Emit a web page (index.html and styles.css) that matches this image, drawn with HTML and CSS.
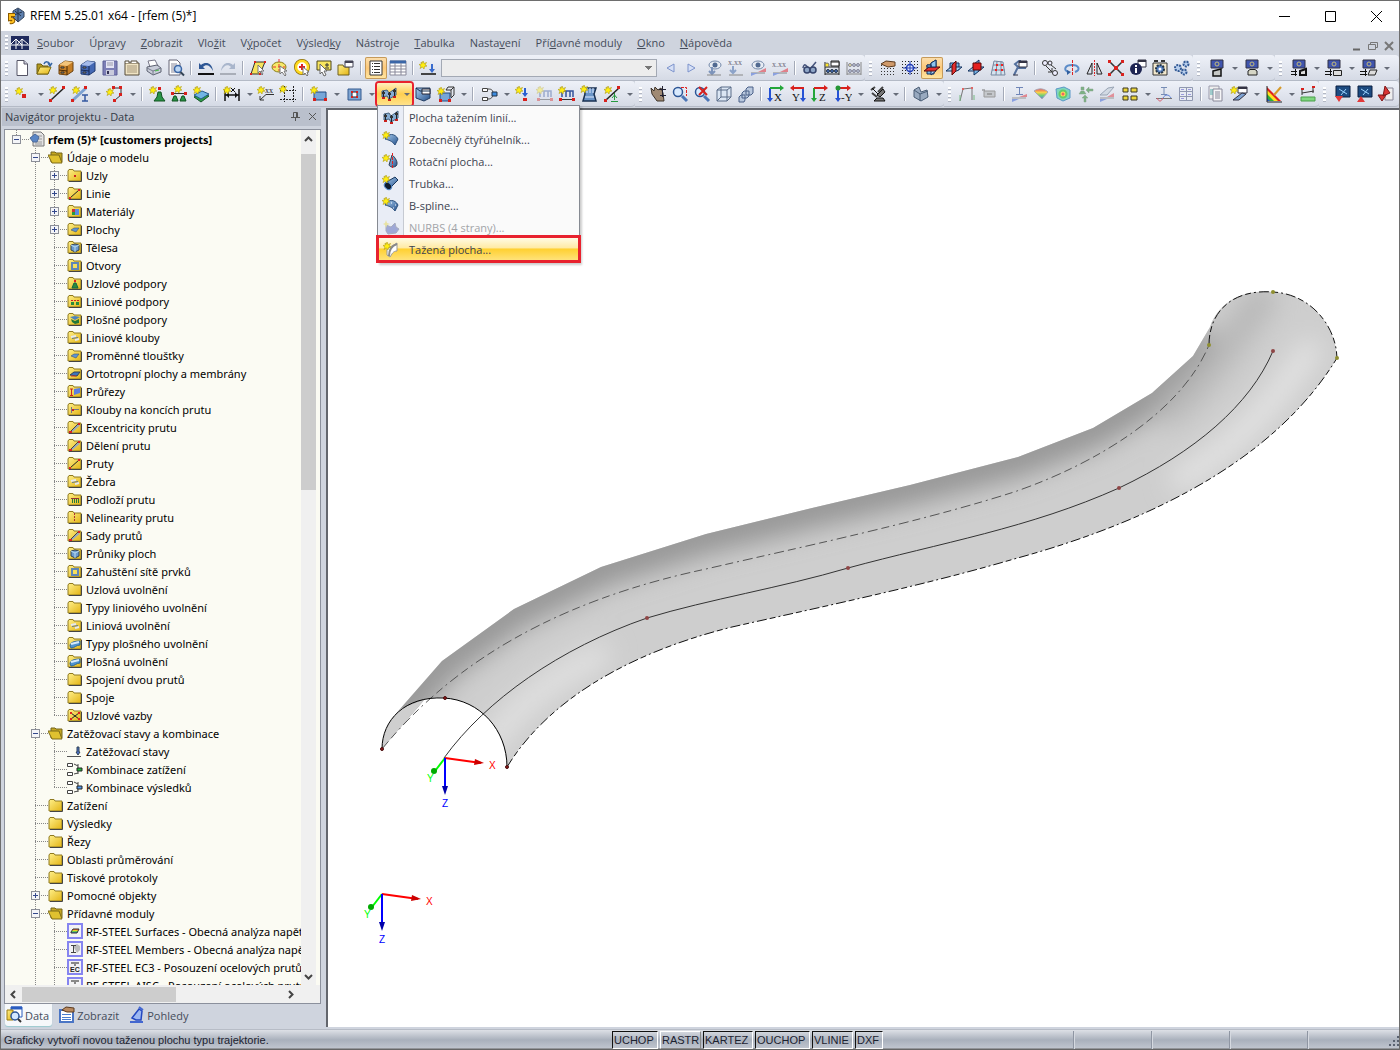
FILE: index.html
```html
<!DOCTYPE html>
<html lang="cs">
<head>
<meta charset="utf-8">
<title>RFEM 5.25.01 x64 - [rfem (5)*]</title>
<link rel="stylesheet" href="styles.css">
</head>
<body>
<svg class="defs" width="0" height="0" aria-hidden="true">
<defs>
<linearGradient id="gy" x2="1" y2="1"><stop offset="0" stop-color="#fff08a"/><stop offset="1" stop-color="#e3b414"/></linearGradient>
<linearGradient id="gb" x2="1" y2="1"><stop offset="0" stop-color="#a9cdef"/><stop offset="1" stop-color="#25518c"/></linearGradient>
<linearGradient id="rb" x2="0" y2="1"><stop offset="0" stop-color="#e33"/><stop offset=".35" stop-color="#fc2"/><stop offset=".65" stop-color="#5c5"/><stop offset="1" stop-color="#36d"/></linearGradient>
<g id="star"><path d="M4 0L5 2.500 7.500 1.500 6 4 8 5 5.500 5.500 5 8 3.500 6 1 7.500 2 5 0 3.500 2.500 3 2 1 3.500 2Z" fill="#ffee10" stroke="#b09c10" stroke-width=".6"/></g>
<g id="mon"><path d="M2 1H14V9H2Z" fill="#3f54ad" stroke="#334"/><circle cx="8" cy="5" r="2" fill="none" stroke="#c4ba78"/></g>
<g id="fold"><path d="M1 4L2 2.500H6L7 4H14V14H1Z" fill="url(#gy)" stroke="#8f7a20"/><path d="M2 14.500H14.500V5" fill="none" stroke="#444"/></g>
</defs>
<symbol id="app" viewBox="0 0 18 18"><path d="M5 4L10 1 16 5V10L10 15 5 10Z" fill="#5d7fae" stroke="#34445c"/><path d="M7 4L13 9M10 2V14M6 8L14 5" stroke="#25354d"/><path d="M7 8H2V12C6 11 7 16 2 15" fill="none" stroke="#8a5a00" stroke-width="4"/><path d="M7 8H2V12C6 11 7 16 2 15" fill="none" stroke="#ffc020" stroke-width="2"/></symbol>
<symbol id="bridge" viewBox="0 0 18 14"><rect width="18" height="14" fill="#1f2a5c"/><path d="M0 9H18M5 3V13M11 3V13M5 3L0 8M5 3L11 9M11 3L17 8M11 3L6 9" stroke="#fff" fill="none"/></symbol>
<symbol id="new" viewBox="0 0 18 18"><path d="M4 1.500H11L14.500 5V16.500H4Z" fill="#fff" stroke="#556"/><path d="M11 1.500V5H14.500" fill="#ccd" stroke="#556"/></symbol>
<symbol id="open" viewBox="0 0 18 18"><path d="M2 15V5H6L8 7H13V15Z" fill="#b39a20" stroke="#6d5c0e"/><path d="M2 15L5 8H16L13 15Z" fill="url(#gy)" stroke="#7a6812"/><path d="M9 5C10 2 14 2 15 6M13 4L15 7 17 4" fill="none" stroke="#3767a5" stroke-width="1.500"/></symbol>
<symbol id="cabo" viewBox="0 0 18 18"><path d="M2 6L8 2 16 3V12L10 16 2 15Z" fill="#c67f26" stroke="#6b4210"/><path d="M2 6L10 7 16 3L8 2Z" fill="#f3c47a"/><path d="M10 7V16M2 11L10 12" stroke="#492a06"/><path d="M4 8H7V9H4ZM4 13H7V14H4Z" fill="#ffe29f" stroke="#333"/></symbol>
<symbol id="cabb" viewBox="0 0 18 18"><path d="M2 6L8 2 16 3V12L10 16 2 15Z" fill="#4468b4" stroke="#203a70"/><path d="M2 6L10 7 16 3L8 2Z" fill="#a5bbea"/><path d="M10 7V16M2 11L10 12" stroke="#172a55"/><path d="M4 8H7V9H4ZM4 13H7V14H4Z" fill="#d5e2ff" stroke="#333"/></symbol>
<symbol id="save" viewBox="0 0 18 18"><path d="M2 2H16V16H2Z" fill="#7c7eb6" stroke="#5d5f96"/><path d="M5 2H13V9H5Z" fill="#e4e4f4"/><path d="M6 4H12M6 6H12" stroke="#99a"/><path d="M5 11H13V16H5Z" fill="#c9cbdc"/><path d="M6 12H8V15H6Z" fill="#335"/></symbol>
<symbol id="note" viewBox="0 0 18 18"><path d="M2 4H16V16H2Z" fill="#f0e4c4" stroke="#544a38"/><path d="M2 4V2H6V4M8 4V2H14V4" fill="#fff" stroke="#544a38"/><path d="M4 7H14M4 9H14M4 11H14M4 13H14" stroke="#a5967a"/></symbol>
<symbol id="print" viewBox="0 0 18 18"><path d="M5 8L3 2 10 1 13 7Z" fill="#fff" stroke="#778"/><path d="M2 8L12 6 16 9V13L8 16 2 12Z" fill="#c9cdd9" stroke="#5d6271"/><path d="M2 9L8 12 16 9M8 12V16" fill="none" stroke="#777c8d"/><path d="M10 12L14 11" stroke="#4b4"/></symbol>
<symbol id="prev" viewBox="0 0 18 18"><path d="M2 1H10L13 4V16H2Z" fill="#fff" stroke="#667"/><path d="M4 5H10M4 7H9M4 9H8M4 11H8M4 13H9" stroke="#889"/><circle cx="11" cy="10" r="3.500" fill="#bcd7f5" stroke="#3a65a5" stroke-width="1.500"/><path d="M13.500 13L17 16.500" stroke="#345" stroke-width="2"/></symbol>
<symbol id="undo" viewBox="0 0 18 18"><path d="M2 4V10H8L6 8C9 5 13 6 16 12C15 4 9 2 4 6Z" fill="#2e5795"/><path d="M1 15H17" stroke="#111" stroke-width="2"/></symbol>
<symbol id="redo" viewBox="0 0 18 18"><path d="M16 4V10H10L12 8C9 5 5 6 2 12C3 4 9 2 14 6Z" fill="#a9b6cc"/><path d="M1 15H17" stroke="#a9aeb8" stroke-width="2"/></symbol>
<symbol id="selp" viewBox="0 0 18 18"><path d="M2 15L6 3H16L11 15Z" fill="#f6e35c" stroke="#333"/><path d="M1 14H3V16H1ZM5 2H7V4H5ZM15 2H17V4H15ZM10 14H12V16H10Z" fill="#d22"/><path d="M9 6V14L11 12 13 16 14 15 12 12H15Z" fill="#fff" stroke="#777"/></symbol>
<symbol id="sele" viewBox="0 0 18 18"><ellipse cx="8" cy="8" rx="7" ry="5" fill="#f6e96a" stroke="#8b7b14"/><path d="M8 0V12M2 8H14" stroke="#e33" stroke-dasharray="3 2"/><path d="M9 7V15L11 13 14 17 15 16 13 12H16Z" fill="#fff" stroke="#777"/></symbol>
<symbol id="selc" viewBox="0 0 18 18"><circle cx="9" cy="8" r="6" fill="none" stroke="#8b6d06" stroke-width="4"/><circle cx="9" cy="8" r="6" fill="#fff" stroke="#ffd91f" stroke-width="2.500"/><path d="M9 5V11M6 8H12" stroke="#d22" stroke-width="2"/><path d="M10 8V16L12 14 14 17 15 16 14 13H16Z" fill="#fff" stroke="#777"/></symbol>
<symbol id="selm" viewBox="0 0 18 18"><path d="M2 2H16V11H2Z" fill="#f8e65e" stroke="#4c461d"/><path d="M10 6H14M12 4V8M10 9H14" stroke="#333"/><path d="M5 5V15L7 13 9 17 11 16 9 12H12Z" fill="#fff" stroke="#666"/></symbol>
<symbol id="wind" viewBox="0 0 18 18"><path d="M1 6H6L7 8H12V16H1Z" fill="url(#gy)" stroke="#6e6120"/><path d="M8 2H16V8H8Z" fill="#fff" stroke="#445"/><path d="M8 3H16" stroke="#445" stroke-width="2"/></symbol>
<symbol id="list" viewBox="0 0 18 18"><path d="M3 2H15V16H3Z" fill="#fff" stroke="#333"/><path d="M7 4.500H13M7 7.500H13M7 10.500H13M7 13.500H13M5 4.500H6M5 7.500H6M5 10.500H6M5 13.500H6" stroke="#333"/></symbol>
<symbol id="tabl" viewBox="0 0 18 18"><path d="M1 2H17V16H1Z" fill="#fff" stroke="#889"/><path d="M1 3H17" stroke="#3b66a7" stroke-width="3"/><path d="M1 7H17M1 10H17M1 13H17M6 4V16M12 4V16" stroke="#889"/></symbol>
<symbol id="lc" viewBox="0 0 18 18"><use href="#star" x="0" y="2"/><path d="M2 15H17" stroke="#444" stroke-width="2"/><path d="M12 5V10H10L13 14 16 10H14V5Z" fill="#376bce"/></symbol>
<symbol id="lt" viewBox="0 0 18 18"><path d="M13 5V13L6 9Z" fill="#d6e0f6" stroke="#7c93cc"/></symbol>
<symbol id="rt" viewBox="0 0 18 18"><path d="M5 5V13L12 9Z" fill="#d6e0f6" stroke="#7c93cc"/></symbol>
<symbol id="eyed" viewBox="0 0 18 18"><ellipse cx="10" cy="6" rx="6" ry="4" fill="#e7ecf3" stroke="#7388a8"/><circle cx="10" cy="6" r="2.500" fill="#516a91"/><path d="M7 8V15M4 12L7 15 10 12" fill="none" stroke="#7d94bb" stroke-width="2"/><path d="M2 16H16" stroke="#888"/></symbol>
<symbol id="xxd" viewBox="0 0 18 18"><path d="M6 7V14M3 11L6 14 9 11" fill="none" stroke="#8ca3c9" stroke-width="2"/><path d="M2 16H16" stroke="#888"/></symbol>
<symbol id="eyer" viewBox="0 0 18 18"><path d="M2 14H16" stroke="#888"/><path d="M9 13L17 9V13Z" fill="#e0808a"/><path d="M2 17L9 14H2Z" fill="#8aa0df"/><ellipse cx="9" cy="6" rx="6" ry="4" fill="#e7ecf3" stroke="#7388a8"/><circle cx="9" cy="6" r="2.500" fill="#516a91"/></symbol>
<symbol id="xxr" viewBox="0 0 18 18"><path d="M2 14H16" stroke="#888"/><path d="M9 13L17 9V13Z" fill="#e0808a"/><path d="M2 17L9 14H2Z" fill="#8aa0df"/></symbol>
<symbol id="glas" viewBox="0 0 18 18"><path d="M2 9C3 3 6 7 8 10M10 9L15 3" fill="none" stroke="#46547c" stroke-width="1.500"/><circle cx="6" cy="11" r="3" fill="#8ea5c6" stroke="#36446c" stroke-width="1.500"/><circle cx="12" cy="11" r="3" fill="#8ea5c6" stroke="#36446c" stroke-width="1.500"/></symbol>
<symbol id="abac" viewBox="0 0 18 18"><path d="M2 3V16M16 3V16M2 15H16M2 8H16" stroke="#222"/><g fill="#496fc0" stroke="#234"><circle cx="5" cy="12" r="1.500"/><circle cx="9" cy="12" r="1.500"/><circle cx="13" cy="12" r="1.500"/></g><circle cx="4" cy="6" r="2" fill="#ffe62c" stroke="#776"/><path d="M8 2H16V7H8Z" fill="#fff" stroke="#222"/><path d="M8 3H16" stroke="#222"/></symbol>
<symbol id="abag" viewBox="0 0 18 18"><path d="M2 3V16M16 3V16M2 15H16" stroke="#888"/><g fill="#b3bdd4" stroke="#889"><circle cx="5" cy="12" r="1.500"/><circle cx="9" cy="12" r="1.500"/><circle cx="13" cy="12" r="1.500"/><circle cx="5" cy="6" r="1.500" fill="#e9e5a0"/><circle cx="9" cy="6" r="1.500"/><circle cx="13" cy="6" r="1.500"/></g></symbol>
<symbol id="hand" viewBox="0 0 18 18"><path d="M2 6.500H17M2 9.500H17M2 12.500H17M2 15.500H17" stroke="#333" stroke-dasharray="1 2"/><path d="M2 5L7 2 16 3V7L9 8Z" fill="#d09a6a" stroke="#5b3a1e"/></symbol>
<symbol id="grid" viewBox="0 0 18 18"><path d="M1 2.500H17M1 5.500H17M1 8.500H17M1 11.500H17M1 14.500H17" stroke="#222" stroke-dasharray="1 2"/><circle cx="9" cy="9" r="3.500" fill="#dfe8ff" stroke="#2440b8" stroke-width="1.500"/><path d="M9 2V16M2 9H16" stroke="#2440b8"/></symbol>
<symbol id="pl1" viewBox="0 0 18 18"><path d="M4 6H11V15H4Z" fill="#73b4e6" stroke="#12305e"/><path d="M8 4L13 1V12L8 16Z" fill="#a6d3f4" stroke="#12305e"/><path d="M1 12L6 8H17L12 12Z" fill="#e53030" stroke="#5b0808"/><path d="M8 4L13 1V8H8ZM4 6H8V8H4Z" fill="#8cc4ee" stroke="#12305e"/></symbol>
<symbol id="pl2" viewBox="0 0 18 18"><path d="M5 4H14V11H5Z" fill="#73b4e6" stroke="#12305e"/><path d="M1 12L6 8H17L12 12Z" fill="#a6d3f4" stroke="#12305e"/><path d="M7 6L11 2V12L7 16Z" fill="#e53030" stroke="#5b0808"/></symbol>
<symbol id="pl3" viewBox="0 0 18 18"><path d="M1 12L6 8H17L12 12Z" fill="#a6d3f4" stroke="#12305e"/><path d="M7 5L12 1V12L7 16Z" fill="#73b4e6" stroke="#12305e"/><path d="M6 4H14V11H6Z" fill="#e51f1f" stroke="#5b0808"/></symbol>
<symbol id="mesh" viewBox="0 0 18 18"><path d="M5 2L14 3 16 16 2 16ZM4 6H15M3 11H16M8 2L7 16M12 2L12 16" fill="#d5e2ee" stroke="#7788a0"/><path d="M7 5H9V7H7ZM12 5H14V7H12ZM6 10H8V12H6ZM12 10H14V12H12Z" fill="#e22"/></symbol>
<symbol id="crane" viewBox="0 0 18 18"><path d="M3 16L7 8 4 5 8 2H10M7 9H15" fill="none" stroke="#54709d" stroke-width="2"/><path d="M8 2H16V8H8Z" fill="#fff" stroke="#334"/><path d="M8 3H16" stroke="#334" stroke-width="2"/><path d="M2 16H7" stroke="#334"/></symbol>
<symbol id="copy" viewBox="0 0 18 18"><circle cx="4" cy="4" r="2.500" fill="#eef" stroke="#333"/><circle cx="9" cy="4" r="2" fill="#eef" stroke="#333"/><circle cx="14" cy="14" r="2.500" fill="#eef" stroke="#333"/><path d="M5 7L11 13M11 9V13H7M10 6L15 10" fill="none" stroke="#333"/></symbol>
<symbol id="rot" viewBox="0 0 18 18"><path d="M5 13C0 11 2 6 9 6S18 11 12 13" fill="none" stroke="#5c8cc8" stroke-width="2"/><path d="M4 11L8 13 4 16Z" fill="#315f9f"/><path d="M9.500 1V17" stroke="#d22" stroke-dasharray="3 1"/></symbol>
<symbol id="mirr" viewBox="0 0 18 18"><path d="M7 4V15H2ZM12 4V15H17Z" fill="none" stroke="#222"/><path d="M9.500 1V17" stroke="#d22" stroke-dasharray="2 1"/></symbol>
<symbol id="xx" viewBox="0 0 18 18"><path d="M3 3L15 15M15 3L3 15" stroke="#333" stroke-width="1.500"/><path d="M1 1H4V4H1ZM14 1H17V4H14ZM1 14H4V17H1ZM14 14H17V17H14ZM7 7H11V11H7Z" fill="#d9221f"/></symbol>
<symbol id="info" viewBox="0 0 18 18"><path d="M9 1H17V8H9Z" fill="#fff" stroke="#334"/><path d="M9 2H17" stroke="#334" stroke-width="2"/><circle cx="7" cy="10" r="6" fill="#1d2452"/><path d="M7 9V14M7 6V8" stroke="#fff" stroke-width="2"/></symbol>
<symbol id="cal" viewBox="0 0 18 18"><path d="M2 4H16V16H2Z" fill="#f3e8cc" stroke="#333"/><path d="M3 2H7M10 2H14" stroke="#333" stroke-width="2"/><circle cx="9" cy="10" r="4" fill="#5780c0" stroke="#234" stroke-dasharray="2 1" stroke-width="2"/><circle cx="9" cy="10" r="1.500" fill="#fff"/></symbol>
<symbol id="gear" viewBox="0 0 18 18"><g fill="#b8cfee" stroke="#335a95" stroke-width="2" stroke-dasharray="2 1"><circle cx="5" cy="9" r="3"/><circle cx="13" cy="5" r="2.500"/><circle cx="11" cy="13" r="2.500"/></g></symbol>
<symbol id="m1" viewBox="0 0 18 18"><use href="#mon" x="1"/><path d="M5 12L13 10V17H5Z" fill="#c6c8c6" stroke="#111" stroke-width="1.500"/></symbol>
<symbol id="m2" viewBox="0 0 18 18"><use href="#mon" x="1"/><path d="M5 16V12L7 10.500H12L14 12V16Z" fill="#d6d6c6" stroke="#222"/></symbol>
<symbol id="m3" viewBox="0 0 18 18"><use href="#mon" x="1"/><path d="M10 12L16 10V16H10Z" fill="#ddd" stroke="#111" stroke-width="2"/><path d="M1 12.500H7M1 15.500H7M5.500 10V17" stroke="#111"/></symbol>
<symbol id="m4" viewBox="0 0 18 18"><use href="#mon" x="1"/><path d="M8.500 11.500H16.500V16.500H8.500Z" fill="#ddd" stroke="#222"/><path d="M0 12.500H7M0 15.500H7M5.500 10V17" stroke="#111"/></symbol>
<symbol id="m5" viewBox="0 0 18 18"><use href="#mon" x="1"/><path d="M8 16L10 11H17L15 16Z" fill="#ddd" stroke="#222"/><path d="M0 12.500H7M0 15.500H7M5.500 10V17" stroke="#111"/></symbol>
<symbol id="node" viewBox="0 0 18 18"><path d="M8 9H12V13H8Z" fill="#d8201c"/><use href="#star" x="1" y="2"/></symbol>
<symbol id="line" viewBox="0 0 18 18"><path d="M3 15L16 3" stroke="#222" stroke-width="1.500"/><path d="M1 14H4V17H1ZM14 1H17V4H14Z" fill="#d8201c"/><use href="#star" x="1" y="1"/></symbol>
<symbol id="memb" viewBox="0 0 18 18"><path d="M2 15L15 3" stroke="#7da2d2" stroke-width="3"/><path d="M0 14H3V17H0ZM13 1H16V4H13Z" fill="#d8201c"/><path d="M11 10H17M11 16H17M14 10V16" stroke="#3458a0" stroke-width="1.500"/><use href="#star" x="1" y="1"/></symbol>
<symbol id="poly" viewBox="0 0 18 18"><path d="M6 3H15V10L9 15" fill="none" stroke="#333"/><path d="M6 1H9V4H6ZM13 1H16V4H13ZM13 8H16V11H13ZM7 14H10V17H7Z" fill="#d8201c"/><use href="#star" x="0" y="3"/></symbol>
<symbol id="sup1" viewBox="0 0 18 18"><path d="M10 2H13V5H10Z" fill="#d8201c"/><path d="M10 7H13L14 12 17 16H6L9 12Z" fill="#299447" stroke="#10521f"/><use href="#star" x="1" y="1"/></symbol>
<symbol id="sup2" viewBox="0 0 18 18"><path d="M2 8.500H16" stroke="#333"/><path d="M1 7H4V10H1ZM14 7H17V10H14Z" fill="#d8201c"/><path d="M4 11H6L8 16H2ZM12 11H14L16 16H10Z" fill="#299447" stroke="#10521f"/><use href="#star" x="4" y="0"/></symbol>
<symbol id="sup3" viewBox="0 0 18 18"><path d="M2 12L10 8 17 11 9 17Z" fill="#2f9b46" stroke="#145426"/><path d="M2 10L10 6 17 9 9 14Z" fill="#70b5e4" stroke="#245a8a"/><use href="#star" x="1" y="1"/></symbol>
<symbol id="dim" viewBox="0 0 18 18"><path d="M2 4V16M16 4V16M2 10H16" stroke="#111" stroke-width="1.500"/><path d="M3 10L6 7V13ZM15 10L12 7V13Z" fill="#111"/><path d="M8 3L12 7M12 3L8 7" stroke="#111"/><use href="#star" x="0" y="1"/></symbol>
<symbol id="note2" viewBox="0 0 18 18"><path d="M17 9.500H9L3 15M3 11V15H7" fill="none" stroke="#333"/><use href="#star" x="0" y="1"/></symbol>
<symbol id="frm" viewBox="0 0 18 18"><path d="M5.500 1V17M14.500 1V17M1 5.500H17M1 14.500H17" stroke="#222" stroke-dasharray="2 1"/><use href="#star" x="0" y="0"/></symbol>
<symbol id="srf" viewBox="0 0 18 18"><path d="M4 7H16V15H4Z" fill="#77a6d8" stroke="#224a80"/><path d="M3 13H6V16H3ZM14 13H17V16H14Z" fill="#d8201c"/><use href="#star" x="0" y="1"/></symbol>
<symbol id="opn" viewBox="0 0 18 18"><path d="M3 4H16V15H3Z" fill="#7fa5d2" stroke="#345a90"/><path d="M7 7H12V12H7Z" fill="#fff" stroke="#223"/><path d="M6 6H8V8H6ZM11 6H13V8H11ZM6 11H8V13H6ZM11 11H13V13H11Z" fill="#d8201c"/></symbol>
<symbol id="swp" viewBox="0 0 18 18"><path d="M2 6L7 5 9 8 16 3V10L9 14 7 11 2 12Z" fill="#86acd3" stroke="#44617f"/><path d="M3.500 6V12M9.500 7V14M14.500 4V11" stroke="#222"/><path d="M2 7H5V9H2ZM8 8H11V10H8ZM13 5H16V7H13Z" fill="#333"/><path d="M2 12H5V14H2ZM8 14H11V16H8ZM13 11H16V13H13Z" fill="#c9201c"/></symbol>
<symbol id="sld" viewBox="0 0 18 18"><path d="M2 3H16V13L10 16 2 13Z" fill="url(#gb)" stroke="#223c60"/><path d="M8 4H16V9H8Z" fill="#fff" stroke="#223"/><path d="M2 3L6 6H16" fill="none" stroke="#17304e"/></symbol>
<symbol id="cub" viewBox="0 0 18 18"><path d="M3 8H13V16H3Z" fill="#77a6d8" stroke="#224a80"/><path d="M9 5L11 2H17V10L14 13M9 5H14V12M14 5L17 2" fill="none" stroke="#333"/><path d="M2 14H5V17H2ZM11 14H14V17H11Z" fill="#d8201c"/><use href="#star" x="0" y="2"/></symbol>
<symbol id="comb" viewBox="0 0 18 18"><path d="M2.500 3.500H7.500V6.500H2.500ZM2.500 12.500H7.500V15.500H2.500Z" fill="#fff" stroke="#444"/><path d="M8 4C12 4 12 5 13 7M8 14C12 14 12 12 13 10" fill="none" stroke="#444"/><path d="M12 7H17V11H12Z" fill="#3c8ce0" stroke="#234"/></symbol>
<symbol id="nld" viewBox="0 0 18 18"><path d="M10 3V8H8L11 12 14 8H12V3Z" fill="#2a5fd0"/><path d="M9 13H13V16H9Z" fill="#d8201c"/><use href="#star" x="1" y="1"/></symbol>
<symbol id="lld" viewBox="0 0 18 18"><path d="M4 12V6H15V12M8 6V12M12 6V12" fill="none" stroke="#33539a" stroke-width="1.500"/><path d="M2 14.500H16" stroke="#333"/><path d="M1 13H4V16H1ZM14 13H17V16H14Z" fill="#d8201c"/><use href="#star" x="0" y="1"/></symbol>
<symbol id="sfl" viewBox="0 0 18 18"><path d="M4 3H16L14 9 16 16H3L5 9Z" fill="#6b95c8" stroke="#1a3152" stroke-width="1.500"/><path d="M7 3V8M10 3V8M13 3V8M5 12H14" stroke="#dfeaff"/><use href="#star" x="0" y="0"/></symbol>
<symbol id="imp" viewBox="0 0 18 18"><path d="M3 15L16 3" stroke="#222" stroke-width="1.500"/><path d="M1 14H4V17H1ZM14 1H17V4H14Z" fill="#d8201c"/><path d="M11.500 8V15M8 16.500H15M9 13L11.500 10 14 13" stroke="#279a3f" fill="none"/><use href="#star" x="1" y="1"/></symbol>
<symbol id="pan" viewBox="0 0 18 18"><path d="M2 3L5 6 6 2 9 5 12 3 14 8 15 16H8L3 9Z" fill="#a08a74" stroke="#3d342b"/><path d="M13.500 1V12M10 4.500H17M11 10.500H17" stroke="#223"/></symbol>
<symbol id="zin" viewBox="0 0 18 18"><path d="M6 2.500H15.500V11" fill="none" stroke="#d22" stroke-dasharray="3 1"/><circle cx="7" cy="7" r="4.500" fill="#d9eafd" stroke="#2c5696" stroke-width="1.500"/><path d="M11 11L16 16" stroke="#4c76b6" stroke-width="3"/></symbol>
<symbol id="zx" viewBox="0 0 18 18"><circle cx="7" cy="7" r="4.500" fill="#d9eafd" stroke="#2c5696" stroke-width="1.500"/><path d="M11 11L16 16" stroke="#4c76b6" stroke-width="3"/><path d="M6 2L14 10M14 2L6 10" stroke="#d8201c" stroke-width="2"/></symbol>
<symbol id="box" viewBox="0 0 18 18"><path d="M2 5L6 2H16V12L12 16H2ZM2 5H12V16M12 5L16 2M6 2V12H16M6 12L2 16" fill="#dbe6f4" stroke="#5a6c88"/></symbol>
<symbol id="boxs" viewBox="0 0 18 18"><path d="M9 4L11 2H16V8L14 10H9ZM5 8L7 6H12V11L10 13H5ZM2 12L4 10H8V15L7 17H2Z" fill="#b9c8de" stroke="#4a6088"/></symbol>
<symbol id="vx" viewBox="0 0 18 18"><path d="M3 3V14" stroke="#2552d5" stroke-width="2"/><path d="M0 13H6L3 17Z" fill="#2552d5"/><path d="M3 3H14" stroke="#24a63a" stroke-width="2"/><path d="M13 0L17 3 13 6Z" fill="#24a63a"/></symbol>
<symbol id="vy" viewBox="0 0 18 18"><path d="M14 3V14" stroke="#2552d5" stroke-width="2"/><path d="M11 13H17L14 17Z" fill="#2552d5"/><path d="M4 3H15" stroke="#d8201c" stroke-width="2"/><path d="M5 0L1 3 5 6Z" fill="#d8201c"/></symbol>
<symbol id="vz" viewBox="0 0 18 18"><path d="M3 3V14" stroke="#24a63a" stroke-width="2"/><path d="M0 13H6L3 17Z" fill="#24a63a"/><path d="M3 3H14" stroke="#d8201c" stroke-width="2"/><path d="M13 0L17 3 13 6Z" fill="#d8201c"/></symbol>
<symbol id="vm" viewBox="0 0 18 18"><path d="M4 3V14" stroke="#2552d5" stroke-width="2"/><path d="M1 13H7L4 17Z" fill="#2552d5"/><path d="M4 3H14" stroke="#d8201c" stroke-width="2"/><path d="M13 0L17 3 13 6Z" fill="#d8201c"/><circle cx="4" cy="3" r="2.500" fill="#249636"/></symbol>
<symbol id="scop" viewBox="0 0 18 18"><path d="M2 5L6 2M3 8L8 12M9 7L14 2" stroke="#444" stroke-width="2"/><path d="M8 10L14 4 16 7 11 12ZM5 16L8 13H14L16 16Z" fill="#777" stroke="#111"/><path d="M3 3L9 9" stroke="#111"/></symbol>
<symbol id="solid" viewBox="0 0 18 18"><path d="M2 5L7 2 9 7 15 5 16 12 9 16 2 12Z" fill="#98a9bf" stroke="#4a5d75"/><path d="M2 5L8 9 16 6M8 9V16" fill="none" stroke="#4a5d75"/></symbol>
<symbol id="fr1" viewBox="0 0 18 18"><path d="M2 16L5 4 14 3 14 15" fill="none" stroke="#777"/><path d="M4 3H6V5H4ZM13 2H15V4H13Z" fill="#d66"/><path d="M2 10V16M16 10V15" stroke="#74ba80"/></symbol>
<symbol id="fr2" viewBox="0 0 18 18"><path d="M4 6H15V12H4Z" fill="#c5c8cc" stroke="#999"/><path d="M2 5H5M7 9H12" stroke="#777"/></symbol>
<symbol id="di" viewBox="0 0 18 18"><path d="M6 2.500H13M6 9.500H13M9.500 2V9" stroke="#7086b8"/><path d="M2 13H16" stroke="#999"/><path d="M2 17L9 14H2Z" fill="#889fe0"/><path d="M9 12L17 9V12Z" fill="#df8790"/></symbol>
<symbol id="sf" viewBox="0 0 18 18"><path d="M2 6C6 3 12 3 16 7L10 14Z" fill="url(#rb)" stroke="#99a" opacity=".8"/></symbol>
<symbol id="cb" viewBox="0 0 18 18"><path d="M2 4L10 2 16 5V13L9 16 3 13Z" fill="#7fd6bd" stroke="#5b98c7"/><circle cx="9" cy="9" r="3.500" fill="#fd5" stroke="#6c6" stroke-width="2"/><circle cx="9" cy="9" r="1.500" fill="#e66"/></symbol>
<symbol id="rs" viewBox="0 0 18 18"><path d="M5 2H8V5H5ZM3 9L5 6H8L10 9ZM10 5L13 2V4H17V6H13V8ZM8 17V13H6L9 10 12 13H10V17Z" fill="#7bb283" stroke="#89a18c" stroke-width=".5"/></symbol>
<symbol id="sl" viewBox="0 0 18 18"><path d="M2 10L10 3 16 2 9 10Z" fill="#d2dae4" stroke="#9aa5b5"/><path d="M9 12L16 8V12Z" fill="#e0909a"/><path d="M2 13H16" stroke="#999"/><path d="M2 17L9 14H2Z" fill="#8aa0df"/></symbol>
<symbol id="four" viewBox="0 0 18 18"><path d="M2 3H7V7H2ZM10 3H16V7H10ZM2 11H7V15H2ZM10 11H16V15H10Z" fill="#ecd63b" stroke="#3b3722"/></symbol>
<symbol id="ib" viewBox="0 0 18 18"><path d="M6 2.500H12M9 2V9M6 9.500H12" stroke="#778cb5"/><path d="M1 13.500H17" stroke="#777"/><path d="M2 13C4 17 6 17 8 13" fill="none" stroke="#d9596b"/><path d="M8 13C10 9 14 9 16 13" fill="none" stroke="#5b7fd5"/></symbol>
<symbol id="tb" viewBox="0 0 18 18"><path d="M2.500 2.500H15.500V15.500H2.500Z" fill="#e7ebf3" stroke="#9098b0"/><path d="M2 6.500H16M2 11.500H16M9.500 2V16" stroke="#9098b0"/><path d="M4 4.500H7M11 4.500H14M4 9.500H7M11 9.500H14M4 13.500H7" stroke="#99d"/></symbol>
<symbol id="rep" viewBox="0 0 18 18"><path d="M2 1H12V14H2Z" fill="#eee" stroke="#99a"/><path d="M6 4H15V16H6Z" fill="#f6f6f8" stroke="#889"/><path d="M8 7H13M8 9H13M8 11H13M8 13H13" stroke="#889"/><path d="M3 5H6M3 7H6M3 9H6" stroke="#5aa"/></symbol>
<symbol id="spl" viewBox="0 0 18 18"><path d="M8 2H17V8H8Z" fill="#fff" stroke="#334"/><path d="M8 3H17" stroke="#334" stroke-width="2"/><path d="M3 15L12 8 16 9 9 15Z" fill="#7fa3d3" stroke="#334"/><use href="#star" x="0" y="1"/></symbol>
<symbol id="clr" viewBox="0 0 18 18"><path d="M2 2V16H16Z" fill="#e02020"/><path d="M2 5V16H13Z" fill="#ffe11f"/><path d="M2 9V16H9Z" fill="#2fae3c"/><path d="M2 13V16H5Z" fill="#25c"/><path d="M2 1V17H17" fill="none" stroke="#222"/><path d="M16 2L9 10" stroke="#d69a2a" stroke-width="2"/></symbol>
<symbol id="rul" viewBox="0 0 18 18"><path d="M2 12H16V16H2Z" fill="#7fd67f" stroke="#4b9f4b"/><path d="M3 8L15 6" stroke="#333"/><path d="M3 4V10M14 2V8" stroke="#333"/><path d="M2 3H5V5H2ZM13 1H16V3H13Z" fill="#d8201c"/></symbol>
<symbol id="r1" viewBox="0 0 18 18"><path d="M3 1H17V12H3Z" fill="#1c4a80" stroke="#0a1e40"/><path d="M6 4L14 9M13 4L8 10" stroke="#9cd4ff"/><path d="M2 11H10L6 17Z" fill="#e23a3a"/></symbol>
<symbol id="r2" viewBox="0 0 18 18"><path d="M3 1H17V12H3Z" fill="#1c4a80" stroke="#0a1e40"/><path d="M6 4L14 9M13 4L8 10" stroke="#9cd4ff"/><path d="M2 17H10L6 11Z" fill="#e23a3a"/></symbol>
<symbol id="r3" viewBox="0 0 18 18"><path d="M8 3H16V15H8Z" fill="#eee" stroke="#889"/><path d="M8 1L13 8 6 11ZM1 10H9L5 16Z" fill="#d93535" stroke="#801818"/></symbol>
<symbol id="quad" viewBox="0 0 18 18"><path d="M3 9C6 3 13 3 16 9L13 15C10 11 7 10 3 9Z" fill="url(#gb)" stroke="#2c507c"/><use href="#star" x="0" y="1"/></symbol>
<symbol id="revo" viewBox="0 0 18 18"><path d="M10 3C13 5 17 11 14 14C11 16 8 15 7 13Z" fill="url(#gb)" stroke="#2c3c50"/><path d="M10.500 1V17" stroke="#d22" stroke-dasharray="3 1"/><use href="#star" x="0" y="2"/></symbol>
<symbol id="pipe" viewBox="0 0 18 18"><path d="M3 9L13 3 16 6 7 15Z" fill="url(#gb)" stroke="#16365d"/><ellipse cx="6" cy="12" rx="4" ry="3" fill="#101c2d" stroke="#4f86c6" transform="rotate(40 6 12)"/><use href="#star" x="0" y="1"/></symbol>
<symbol id="bspl" viewBox="0 0 18 18"><path d="M3 9C6 3 13 3 16 9L13 15C10 11 7 10 3 9Z" fill="url(#gb)" stroke="#2c507c"/><path d="M9 7H10M13 9H14M11 12H12" stroke="#fff"/><use href="#star" x="0" y="1"/></symbol>
<symbol id="nurb" viewBox="0 0 18 18"><path d="M4 7L9 9 13 5 14 9 17 11 14 15 6 16 4 13Z" fill="#9ea8d6" stroke="#a7acbe"/><path d="M4 2L5 5 8 6 5 7 4 10 3 7 1 6 3 5Z" fill="#e8e3a2"/></symbol>
<symbol id="traj" viewBox="0 0 18 18"><path d="M5 9L15 3V11C11 11 10 14 8 17L5 15Z" fill="#fff" stroke="#999"/><path d="M7 16C7 10 9 6 15 4" fill="none" stroke="#888" stroke-width="2"/><use href="#star" x="1" y="2"/></symbol>
<symbol id="root" viewBox="0 0 16 16"><path d="M4 1H12L15 4V15H4Z" fill="#e3e3e3" stroke="#777"/><path d="M9 5H13M9 8H13M6 11H13M6 13H13" stroke="#999"/><path d="M1 7L6 3 10 6 8 11 4 11Z" fill="#5a86c5" stroke="#4c6a9a"/></symbol>
<symbol id="fo" viewBox="0 0 16 16"><path d="M3 13V3H7L8 4H14V13Z" fill="#c4a720" stroke="#756418"/><path d="M0 6H11L14 14H4Z" fill="#dfc12f" stroke="#7d6b18"/></symbol>
<symbol id="f" viewBox="0 0 16 16"><use href="#fold"/></symbol>
<symbol id="f1" viewBox="0 0 16 16"><use href="#fold"/><path d="M7 8H9V10H7Z" fill="#c22"/></symbol>
<symbol id="f2" viewBox="0 0 16 16"><use href="#fold"/><path d="M3 13L12 5" stroke="#222"/><path d="M2 12H4V14H2ZM11 4H13V6H11Z" fill="#d22"/></symbol>
<symbol id="f3" viewBox="0 0 16 16"><use href="#fold"/><path d="M5 6H8V9H5Z" fill="#c33"/><path d="M5 9H8V12H5Z" fill="#2a9a3c"/><path d="M8 6H12V12H8Z" fill="#5b8be0"/></symbol>
<symbol id="f4" viewBox="0 0 16 16"><use href="#fold"/><path d="M4 9L7 7 12 7 9 11Z" fill="#5c94d6" stroke="#456" stroke-width=".6"/></symbol>
<symbol id="f5" viewBox="0 0 16 16"><use href="#fold"/><path d="M4 6L8 5 12 6V11L8 13 4 11Z" fill="#6b9bd0" stroke="#345"/><path d="M4 6L8 8 12 6M8 8V13" fill="none" stroke="#bde"/></symbol>
<symbol id="f6" viewBox="0 0 16 16"><use href="#fold"/><path d="M5 6H11V12H5Z" fill="#f5df5d" stroke="#5e86b6" stroke-width="2"/></symbol>
<symbol id="f7" viewBox="0 0 16 16"><use href="#fold"/><path d="M7 5H9V7H7Z" fill="#d22"/><path d="M7 8H9L11 13H5Z" fill="#2a8a3c" stroke="#164"/></symbol>
<symbol id="f8" viewBox="0 0 16 16"><use href="#fold"/><path d="M4 7.500H12" stroke="#c22" stroke-dasharray="2 1"/><path d="M4 9H7V12H4ZM9 9H12V12H9Z" fill="#2a8a3c"/></symbol>
<symbol id="f9" viewBox="0 0 16 16"><use href="#fold"/><path d="M3 6L8 5 13 6 8 9Z" fill="#4b82bd"/><path d="M4 8L8 10 12 8V12L8 13 5 11Z" fill="#23783a"/></symbol>
<symbol id="f10" viewBox="0 0 16 16"><use href="#fold"/><path d="M4 8L9 7M8 11L12 10" stroke="#e4e8f0" stroke-width="2"/><path d="M5 9.500L11 8.500" stroke="#678"/></symbol>
<symbol id="f11" viewBox="0 0 16 16"><use href="#fold"/><path d="M3 10L7 7 13 7 10 11Z" fill="#3e74bd" stroke="#345"/><path d="M4 11H9" stroke="#c33"/></symbol>
<symbol id="f12" viewBox="0 0 16 16"><use href="#fold"/><path d="M4.500 6V13M3 6H6M3 12.500H6" stroke="#c22"/><path d="M7 6L13 5V10L7 12Z" fill="#5b7fe0"/></symbol>
<symbol id="f13" viewBox="0 0 16 16"><use href="#fold"/><path d="M4.500 6V12M5 8.500H12" stroke="#778"/><path d="M5 8H7V10H5Z" fill="#c22"/></symbol>
<symbol id="f14" viewBox="0 0 16 16"><use href="#fold"/><path d="M4 13L12 6" stroke="#9ab" stroke-width="2"/><path d="M4 12L12 4" stroke="#444"/><path d="M2 12H5V14H2ZM11 4H13V6H11Z" fill="#d22"/></symbol>
<symbol id="f15" viewBox="0 0 16 16"><use href="#fold"/><path d="M5.500 12V8M7.500 12V8M9.500 12V8M11.500 12V8" stroke="#287a3b"/><path d="M4 7.500H12" stroke="#933"/></symbol>
<symbol id="f16" viewBox="0 0 16 16"><use href="#fold"/><path d="M7.500 4V13" stroke="#a33" stroke-dasharray="2 1"/></symbol>
<symbol id="f17" viewBox="0 0 16 16"><use href="#fold"/><path d="M3 11C3 7 8 6 13 6V10C9 10 8 13 4 13Z" fill="#4e93cf" stroke="#2c6798"/><path d="M4 9L12 7" stroke="#d6eafa" stroke-width="2"/></symbol>
<symbol id="f18" viewBox="0 0 16 16"><use href="#fold"/><path d="M4 6L12 12M12 6L4 12" stroke="#222"/><path d="M3 5H5V7H3ZM11 5H13V7H11ZM3 11H5V13H3ZM11 11H13V13H11Z" fill="#d22"/></symbol>
<symbol id="lcase" viewBox="0 0 16 16"><path d="M0 13.500H14" stroke="#555"/><path d="M10 4V9H9L11 12 13 9H12V4Z" fill="#4a70c8" stroke="#345"/></symbol>
<symbol id="ck" viewBox="0 0 16 16"><path d="M0.500 2.500H5.500V5.500H0.500ZM0.500 11.500H5.500V14.500H0.500Z" fill="#fff" stroke="#444"/><path d="M7 3L11 5M7 13L11 12M11 3V13" stroke="#444"/><path d="M10 7H15V10H10Z" fill="#25b83c" stroke="#222"/></symbol>
<symbol id="cv" viewBox="0 0 16 16"><path d="M0.500 2.500H5.500V5.500H0.500ZM0.500 11.500H5.500V14.500H0.500Z" fill="#fff" stroke="#444"/><path d="M7 3L11 5M7 13L11 12M11 3V13" stroke="#444"/><path d="M10 7H15V10H10Z" fill="#559aec" stroke="#222"/></symbol>
<symbol id="mo1" viewBox="0 0 16 16"><path d="M1 1H15V15H1Z" fill="#f2f2f4" stroke="#8685f0" stroke-width="2"/><path d="M4 9L6 6H12L10 10H4Z" fill="url(#rb)" stroke="#333"/></symbol>
<symbol id="mo2" viewBox="0 0 16 16"><path d="M1 1H15V15H1Z" fill="#f2f2f4" stroke="#8685f0" stroke-width="2"/><path d="M6 5L10 3 13 5V9L10 12Z" fill="#bbb"/><path d="M4 4.500H9M4 11.500H9M6.500 4V12" stroke="#444"/></symbol>
<symbol id="mo3" viewBox="0 0 16 16"><path d="M1 1H15V15H1Z" fill="#f2f2f4" stroke="#8685f0" stroke-width="2"/><path d="M4 4H12M8 3V7" stroke="#888" stroke-width="2"/></symbol>
<symbol id="td" viewBox="0 0 18 18"><path d="M5 1H16V11H5Z" fill="#fff" stroke="#2a5cc0"/><path d="M5 2H16" stroke="#2a5cc0" stroke-width="3"/><path d="M1 4H7V14H1Z" fill="url(#gy)" stroke="#9a7d10"/><circle cx="9" cy="10" r="4" fill="#d4e8ff" stroke="#2c5696" stroke-width="1.500"/><path d="M12 13L15 16" stroke="#333" stroke-width="2"/></symbol>
<symbol id="tz" viewBox="0 0 18 18"><path d="M2 4H15V16H2Z" fill="#fff" stroke="#4a75c5" stroke-width="2"/><path d="M4 8.500H13M4 11.500H13M4 13.500H13" stroke="#4b7ed0"/><path d="M4 4L8 1 16 2V6L9 6Z" fill="#b98a60" stroke="#5b3a1e"/></symbol>
<symbol id="tp" viewBox="0 0 18 18"><path d="M4 12L11 3 14 5 13 14H8Z" fill="#9db8f2" stroke="#2347c0" stroke-width="1.500"/><path d="M11 1L15 4M2 16H15" stroke="#4367d0" stroke-width="2"/></symbol>
</svg>

<div class="window">
<header class="title">
  <svg class="ic"><use href="#app"/></svg>
  <h1>RFEM 5.25.01 x64 - [rfem (5)*]</h1>
  <div class="winbtns">
    <button aria-label="Minimalizovat"><svg width="11" height="11"><path d="M0 5.500H11" stroke="#000"/></svg></button>
    <button aria-label="Maximalizovat"><svg width="11" height="11"><path d="M.5 .5H10.500V10.500H.5Z" fill="none" stroke="#000"/></svg></button>
    <button aria-label="Zavřít"><svg width="11" height="11"><path d="M0 0L11 11M11 0L0 11" stroke="#000"/></svg></button>
  </div>
</header>

<nav class="menubar">
  <i class="grip"></i>
  <svg class="bridge"><use href="#bridge"/></svg>
  <a href="#"><u>S</u>oubor</a><a href="#">Úpr<u>a</u>vy</a><a href="#"><u>Z</u>obrazit</a><a href="#">Vlo<u>ž</u>it</a><a href="#">V<u>ý</u>počet</a><a href="#">Výsled<u>k</u>y</a><a href="#">Nástro<u>j</u>e</a><a href="#"><u>T</u>abulka</a><a href="#">Nasta<u>v</u>ení</a><a href="#">Pří<u>d</u>avné moduly</a><a href="#"><u>O</u>kno</a><a href="#"><u>N</u>ápověda</a>
  <div class="mdi">
    <button aria-label="Minimalizovat okno"><svg width="10" height="10"><path d="M1 8.500H8" stroke="#666" stroke-width="2"/></svg></button>
    <button aria-label="Obnovit okno"><svg width="10" height="10"><path d="M2.500 3V1.500H9.500V6.500H8M.5 3.500H7.500V8.500H.5Z" fill="none" stroke="#777"/></svg></button>
    <button aria-label="Zavřít okno"><svg width="10" height="10"><path d="M1 1L9 9M9 1L1 9" stroke="#777" stroke-width="2"/></svg></button>
  </div>
</nav>

<div class="toolbar">
 <div class="group">
  <i class="grip"></i>
  <button class="b"><svg><use href="#new"/></svg></button><button class="b"><svg><use href="#open"/></svg></button><button class="b"><svg><use href="#cabo"/></svg></button><button class="b"><svg><use href="#cabb"/></svg></button><button class="b"><svg><use href="#save"/></svg></button><button class="b"><svg><use href="#note"/></svg></button><button class="b"><svg><use href="#print"/></svg></button><button class="b"><svg><use href="#prev"/></svg></button>
  <i class="sep"></i>
  <button class="b"><svg><use href="#undo"/></svg></button><button class="b"><svg><use href="#redo"/></svg></button>
  <i class="sep"></i>
  <button class="b"><svg><use href="#selp"/></svg></button><button class="b"><svg><use href="#sele"/></svg></button><button class="b"><svg><use href="#selc"/></svg></button><button class="b"><svg><use href="#selm"/></svg></button><button class="b"><svg><use href="#wind"/></svg></button>
  <i class="sep"></i>
  <button class="b on"><svg><use href="#list"/></svg></button><button class="b"><svg><use href="#tabl"/></svg></button>
  <i class="sep"></i>
  <button class="b"><svg><use href="#lc"/></svg></button>
  <select class="combo" aria-label="Zatěžovací stav"><option></option></select>
  <button class="b"><svg><use href="#lt"/></svg></button><button class="b"><svg><use href="#rt"/></svg></button><button class="b"><svg><use href="#eyed"/></svg></button><button class="b"><svg><use href="#xxd"/><text x="1" y="6" class="xx">x.xx</text></svg></button><button class="b"><svg><use href="#eyer"/></svg></button><button class="b"><svg><use href="#xxr"/><text x="1" y="8" class="xx">x.xx</text></svg></button>
  <i class="sep"></i>
  <button class="b"><svg><use href="#glas"/></svg></button><button class="b"><svg><use href="#abac"/></svg></button><button class="b"><svg><use href="#abag"/></svg></button>
 </div>
 <div class="group">
  <i class="grip"></i>
  <button class="b"><svg><use href="#hand"/></svg></button><button class="b"><svg><use href="#grid"/></svg></button><button class="b on"><svg><use href="#pl1"/></svg></button><button class="b"><svg><use href="#pl2"/></svg></button><button class="b"><svg><use href="#pl3"/></svg></button><button class="b"><svg><use href="#mesh"/></svg></button><button class="b"><svg><use href="#crane"/></svg></button>
  <i class="sep"></i>
  <button class="b"><svg><use href="#copy"/></svg></button><button class="b"><svg><use href="#rot"/></svg></button><button class="b"><svg><use href="#mirr"/></svg></button><button class="b"><svg><use href="#xx"/></svg></button><button class="b"><svg><use href="#info"/></svg></button><button class="b"><svg><use href="#cal"/></svg></button><button class="b"><svg><use href="#gear"/></svg></button>
 </div>
 <div class="group">
  <i class="grip"></i>
  <button class="b s"><svg><use href="#m1"/></svg></button><button class="b s"><svg><use href="#m2"/></svg></button>
 </div>
 <div class="group">
  <i class="grip"></i>
  <button class="b s"><svg><use href="#m3"/></svg></button><button class="b s"><svg><use href="#m4"/></svg></button><button class="b s"><svg><use href="#m5"/></svg></button>
 </div>
</div>

<div class="toolbar">
 <div class="group">
  <i class="grip"></i>
  <button class="b s"><svg><use href="#node"/></svg></button><button class="b"><svg><use href="#line"/></svg></button><button class="b s"><svg><use href="#memb"/></svg></button><button class="b s"><svg><use href="#poly"/></svg></button>
  <i class="sep"></i>
  <button class="b"><svg><use href="#sup1"/></svg></button><button class="b"><svg><use href="#sup2"/></svg></button><button class="b"><svg><use href="#sup3"/></svg></button>
  <i class="sep"></i>
  <button class="b s"><svg><use href="#dim"/></svg></button><button class="b"><svg><use href="#note2"/><text x="8" y="8" class="xx dk">xx</text></svg></button><button class="b"><svg><use href="#frm"/></svg></button>
  <i class="sep"></i>
  <button class="b s"><svg><use href="#srf"/></svg></button><button class="b s"><svg><use href="#opn"/></svg></button>
  <div class="drop">
   <button class="b s on red"><svg><use href="#swp"/></svg></button>
   <div class="menu">
    <button><svg><use href="#swp"/></svg><span>Plocha tažením linií...</span></button>
    <button><svg><use href="#quad"/></svg><span>Zobecnělý čtyřúhelník...</span></button>
    <button><svg><use href="#revo"/></svg><span>Rotační plocha...</span></button>
    <button><svg><use href="#pipe"/></svg><span>Trubka...</span></button>
    <button><svg><use href="#bspl"/></svg><span>B-spline...</span></button>
    <button disabled><svg><use href="#nurb"/></svg><span>NURBS (4 strany)...</span></button>
    <button class="hot"><svg><use href="#traj"/></svg><span>Tažená plocha...</span></button>
   </div>
  </div>
  <button class="b"><svg><use href="#sld"/></svg></button><button class="b s"><svg><use href="#cub"/></svg></button>
  <i class="sep"></i>
  <button class="b s"><svg><use href="#comb"/></svg></button><button class="b"><svg><use href="#nld"/></svg></button><button class="b dim"><svg><use href="#lld"/></svg></button><button class="b"><svg><use href="#lld"/></svg></button><button class="b"><svg><use href="#sfl"/></svg></button><button class="b s"><svg><use href="#imp"/></svg></button>
 </div>
 <div class="group">
  <i class="grip"></i>
  <button class="b"><svg><use href="#pan"/></svg></button><button class="b"><svg><use href="#zin"/></svg></button><button class="b"><svg><use href="#zx"/></svg></button><button class="b"><svg><use href="#box"/></svg></button><button class="b"><svg><use href="#boxs"/></svg></button>
  <i class="sep"></i>
  <button class="b"><svg><use href="#vx"/><text x="7" y="16" class="ax">X</text></svg></button><button class="b"><svg><use href="#vy"/><text x="3" y="16" class="ax">Y</text></svg></button><button class="b"><svg><use href="#vz"/><text x="8" y="16" class="ax">Z</text></svg></button><button class="b s"><svg><use href="#vm"/><text x="7" y="16" class="ax">-Y</text></svg></button><button class="b s"><svg><use href="#scop"/></svg></button>
  <i class="sep"></i>
  <button class="b s"><svg><use href="#solid"/></svg></button>
 </div>
 <div class="group">
  <i class="grip"></i>
  <button class="b"><svg><use href="#fr1"/></svg></button><button class="b"><svg><use href="#fr2"/></svg></button>
  <i class="sep"></i>
  <button class="b"><svg><use href="#di"/></svg></button><button class="b"><svg><use href="#sf"/></svg></button><button class="b"><svg><use href="#cb"/></svg></button><button class="b"><svg><use href="#rs"/></svg></button><button class="b"><svg><use href="#sl"/></svg></button><button class="b s"><svg><use href="#four"/></svg></button><button class="b"><svg><use href="#ib"/></svg></button><button class="b"><svg><use href="#tb"/></svg></button>
  <i class="sep"></i>
  <button class="b"><svg><use href="#rep"/></svg></button><button class="b s"><svg><use href="#spl"/></svg></button><button class="b s"><svg><use href="#clr"/></svg></button><button class="b"><svg><use href="#rul"/></svg></button>
 </div>
 <div class="group">
  <i class="grip"></i>
  <button class="b"><svg><use href="#r1"/></svg></button><button class="b"><svg><use href="#r2"/></svg></button><button class="b"><svg><use href="#r3"/></svg></button>
 </div>
</div>

<main class="work">
<aside class="navi">
 <div class="navihead"><h2>Navigátor projektu - Data</h2>
  <button aria-label="Připnout"><svg width="9" height="10"><path d="M2.500 6V1.500H6.500V6M5.500 1V6M0 6.500H9M4.500 7V10" fill="none" stroke="#555"/></svg></button>
  <button aria-label="Zavřít panel"><svg width="9" height="9"><path d="M1 1L8 8M8 1L1 8" stroke="#555"/></svg></button>
 </div>
 <div class="treebox">
 <div class="treemain">
 <ul class="tree">
 <li><div class="r"><button class="t m" aria-label="Sbalit"></button><svg><use href="#root"/></svg><b>rfem (5)* [customers projects]</b></div>
 <ul>
  <li><div class="r"><button class="t m" aria-label="Sbalit"></button><svg><use href="#fo"/></svg><span>Údaje o modelu</span></div>
  <ul>
   <li><div class="r"><button class="t p" aria-label="Rozbalit"></button><svg><use href="#f1"/></svg><span>Uzly</span></div></li>
   <li><div class="r"><button class="t p" aria-label="Rozbalit"></button><svg><use href="#f2"/></svg><span>Linie</span></div></li>
   <li><div class="r"><button class="t p" aria-label="Rozbalit"></button><svg><use href="#f3"/></svg><span>Materiály</span></div></li>
   <li><div class="r"><button class="t p" aria-label="Rozbalit"></button><svg><use href="#f4"/></svg><span>Plochy</span></div></li>
   <li><div class="r"><svg><use href="#f5"/></svg><span>Tělesa</span></div></li>
   <li><div class="r"><svg><use href="#f6"/></svg><span>Otvory</span></div></li>
   <li><div class="r"><svg><use href="#f7"/></svg><span>Uzlové podpory</span></div></li>
   <li><div class="r"><svg><use href="#f8"/></svg><span>Liniové podpory</span></div></li>
   <li><div class="r"><svg><use href="#f9"/></svg><span>Plošné podpory</span></div></li>
   <li><div class="r"><svg><use href="#f10"/></svg><span>Liniové klouby</span></div></li>
   <li><div class="r"><svg><use href="#f4"/></svg><span>Proměnné tloušťky</span></div></li>
   <li><div class="r"><svg><use href="#f11"/></svg><span>Ortotropní plochy a membrány</span></div></li>
   <li><div class="r"><svg><use href="#f12"/></svg><span>Průřezy</span></div></li>
   <li><div class="r"><svg><use href="#f13"/></svg><span>Klouby na koncích prutu</span></div></li>
   <li><div class="r"><svg><use href="#f14"/></svg><span>Excentricity prutu</span></div></li>
   <li><div class="r"><svg><use href="#f14"/></svg><span>Dělení prutu</span></div></li>
   <li><div class="r"><svg><use href="#f2"/></svg><span>Pruty</span></div></li>
   <li><div class="r"><svg><use href="#f10"/></svg><span>Žebra</span></div></li>
   <li><div class="r"><svg><use href="#f15"/></svg><span>Podloží prutu</span></div></li>
   <li><div class="r"><svg><use href="#f16"/></svg><span>Nelinearity prutu</span></div></li>
   <li><div class="r"><svg><use href="#f14"/></svg><span>Sady prutů</span></div></li>
   <li><div class="r"><svg><use href="#f5"/></svg><span>Průniky ploch</span></div></li>
   <li><div class="r"><svg><use href="#f6"/></svg><span>Zahuštění sítě prvků</span></div></li>
   <li><div class="r"><svg><use href="#f"/></svg><span>Uzlová uvolnění</span></div></li>
   <li><div class="r"><svg><use href="#f"/></svg><span>Typy liniového uvolnění</span></div></li>
   <li><div class="r"><svg><use href="#f10"/></svg><span>Liniová uvolnění</span></div></li>
   <li><div class="r"><svg><use href="#f17"/></svg><span>Typy plošného uvolnění</span></div></li>
   <li><div class="r"><svg><use href="#f17"/></svg><span>Plošná uvolnění</span></div></li>
   <li><div class="r"><svg><use href="#f"/></svg><span>Spojení dvou prutů</span></div></li>
   <li><div class="r"><svg><use href="#f"/></svg><span>Spoje</span></div></li>
   <li><div class="r"><svg><use href="#f18"/></svg><span>Uzlové vazby</span></div></li>
  </ul></li>
  <li><div class="r"><button class="t m" aria-label="Sbalit"></button><svg><use href="#fo"/></svg><span>Zatěžovací stavy a kombinace</span></div>
  <ul>
   <li><div class="r"><svg><use href="#lcase"/></svg><span>Zatěžovací stavy</span></div></li>
   <li><div class="r"><svg><use href="#ck"/></svg><span>Kombinace zatížení</span></div></li>
   <li><div class="r"><svg><use href="#cv"/></svg><span>Kombinace výsledků</span></div></li>
  </ul></li>
  <li><div class="r"><svg><use href="#f"/></svg><span>Zatížení</span></div></li>
  <li><div class="r"><svg><use href="#f"/></svg><span>Výsledky</span></div></li>
  <li><div class="r"><svg><use href="#f"/></svg><span>Řezy</span></div></li>
  <li><div class="r"><svg><use href="#f"/></svg><span>Oblasti průměrování</span></div></li>
  <li><div class="r"><svg><use href="#f"/></svg><span>Tiskové protokoly</span></div></li>
  <li><div class="r"><button class="t p" aria-label="Rozbalit"></button><svg><use href="#f"/></svg><span>Pomocné objekty</span></div></li>
  <li><div class="r"><button class="t m" aria-label="Sbalit"></button><svg><use href="#fo"/></svg><span>Přídavné moduly</span></div>
  <ul>
   <li><div class="r"><svg><use href="#mo1"/></svg><span>RF-STEEL Surfaces - Obecná analýza napětí</span></div></li>
   <li><div class="r"><svg><use href="#mo2"/></svg><span>RF-STEEL Members - Obecná analýza napětí</span></div></li>
   <li><div class="r"><svg><use href="#mo3"/><text x="3" y="13" class="ec">EC</text></svg><span>RF-STEEL EC3 - Posouzení ocelových prutů</span></div></li>
   <li><div class="r"><svg><use href="#mo3"/></svg><span>RF-STEEL AISC - Posouzení ocelových prutů</span></div></li>
   <li><div class="r"></div></li>
  </ul></li>
  <li></li>
 </ul></li>
 </ul>
 <div class="vs"><svg width="9" height="6"><path d="M1 5L4.500 1.500 8 5" class="ch"/></svg><i></i><svg width="9" height="6"><path d="M1 1L4.500 4.500 8 1" class="ch"/></svg></div>
 </div>
 <div class="hs"><svg width="6" height="9"><path d="M5 1L1.500 4.500 5 8" class="ch"/></svg><i></i><svg width="6" height="9"><path d="M1 1L4.500 4.500 1 8" class="ch"/></svg></div>
 </div>
 <div class="tabs">
  <button class="cur"><svg><use href="#td"/></svg>Data</button><button><svg><use href="#tz"/></svg>Zobrazit</button><button><svg><use href="#tp"/></svg>Pohledy</button>
 </div>
</aside>
<section class="view">
<svg class="scene">
<defs>
<filter id="bl" x="-20%" y="-20%" width="140%" height="140%"><feGaussianBlur stdDeviation="13"/></filter>
<clipPath id="cp"><path d="M400 709L442 661 514 609 601 567 706 534 812 508 910 485 1018 457 1093 428 1152 393 1193 356 1210 327C1218 304 1240 289 1273 292C1310 294 1336 325 1337 358C1275 460 1150 522 1014 559C925 585 830 605 732 627C620 655 545 705 507 767C507 730 480 700 444 698C437 697 431 698 425 699L382 749C382 735 388 722 400 709Z"/></clipPath>
<g id="axes"><path d="M0 0L36 5" stroke="red" stroke-width="2"/><path d="M30 1L39 5 29 7Z" fill="#c00"/><path d="M0 0L-10 13" stroke="#0f0" stroke-width="2"/><circle cx="-11" cy="13" r="3" fill="#0a0"/><path d="M0 0V32" stroke="#00f" stroke-width="2"/><path d="M-3 28H3L0 37Z" fill="#00a"/></g>
</defs>
<g transform="translate(-328 -110)" fill="none">
<g clip-path="url(#cp)">
<rect x="370" y="280" width="980" height="500" fill="#cecece"/>
<g filter="url(#bl)" stroke-linecap="round">
<path d="M400 709L442 661 514 609 601 567 706 534 812 508 910 485 1018 457 1093 428 1152 393 1200 350" stroke="#969696" stroke-width="40"/>
<path d="M1170 410C1220 365 1225 345 1262 300" stroke="#b8b8b8" stroke-width="30"/>
<path d="M490 745C520 700 560 675 600 655" stroke="#e4e4e4" stroke-width="20"/>
<path d="M1180 480C1230 450 1270 410 1310 350" stroke="#e6e6e6" stroke-width="20"/>
</g>
<path d="M382 749C382 735 388 722 400 709L425 699Z" fill="#cfcfcf"/>
</g>
<path d="M382 749C455 660 560 600 706 569C810 545 920 522 1014 492C1090 466 1180 415 1209 345" stroke="#555" stroke-dasharray="10 4 8 4 2 4"/>
<path d="M507 767C545 705 620 655 732 627C830 605 925 585 1014 559C1150 522 1275 460 1337 358M1209 345C1209 312 1232 289 1273 292C1310 294 1336 325 1337 358" stroke="#111" stroke-dasharray="10 3 6 3 2 3"/>
<path d="M444 758C486 700 560 648 647 618C710 599 780 588 848 568C940 543 1030 528 1119 488C1195 452 1250 405 1273 351" stroke="#333"/>
<path d="M382 749C382 720 405 696 444 698C480 700 507 730 507 767" stroke="#000"/>
<g fill="#8b1a1a" stroke="#4b1010" stroke-width="1"><circle cx="382" cy="749" r="1.500"/><circle cx="445" cy="698" r="1.500"/><circle cx="507" cy="767" r="1.500"/></g>
<g fill="#8f4646"><circle cx="647" cy="618" r="2"/><circle cx="848" cy="568" r="2"/><circle cx="1119" cy="488" r="2"/><circle cx="1273" cy="351" r="2"/></g>
<g fill="#8f8f30"><circle cx="1273" cy="292" r="2"/><circle cx="1209" cy="345" r="2"/><circle cx="1337" cy="358" r="2"/></g>
<use href="#axes" x="445" y="758"/><use href="#axes" x="382" y="894"/>
<g class="lab"><text x="489" y="769" fill="red">X</text><text x="427" y="782" fill="#0f0">Y</text><text x="442" y="807" fill="#00f">Z</text><text x="426" y="905" fill="red">X</text><text x="364" y="918" fill="#0f0">Y</text><text x="379" y="943" fill="#00f">Z</text></g>
</g>
</svg>
</section>
</main>

<footer class="status">
 <p>Graficky vytvoří novou taženou plochu typu trajektorie.</p>
 <button class="w3">UCHOP</button><button class="w2 up">RASTR</button><button class="w4">KARTEZ</button><button class="w5">OUCHOP</button><button class="w2">VLINIE</button><button class="w1">DXF</button>
 <div class="panes"><i></i><i></i><i></i><i></i></div>
 <svg class="size" width="12" height="12"><path d="M10 2H12M6 6H8M10 6H12M2 10H4M6 10H8M10 10H12" stroke="#5a6270" stroke-width="2"/></svg>
</footer>
</div>
</body>
</html>
```
FILE: styles.css
```css
* { box-sizing: border-box; }
body { margin: 0; font-family: "Open Sans", "Noto Sans", sans-serif; font-size: 11px; color: #000; }
button { font: inherit; color: inherit; background: none; border: 0; padding: 0; margin: 0; }
h1, h2, p, ul { margin: 0; padding: 0; font-weight: normal; font-size: inherit; }
ul { list-style: none; }
i { font-style: normal; }
.defs { position: absolute; }
.xx { font: 8px "Liberation Serif", serif; fill: #667; }
.xx.dk { fill: #222; }
.ax { font: 11px "Liberation Serif", serif; fill: #111; }
.ec { font: bold 7px "Liberation Sans", sans-serif; fill: #222; }

.window { display: flex; flex-direction: column; height: 100vh; border: 1px solid #6e6e6e; border-width: 1px 1px 0; background: #cfd4de; }

.title { display: flex; align-items: center; height: 30px; flex: none; background: #fff; padding-left: 7px; }
.ic { width: 18px; height: 18px; }
.title h1 { flex: 1; padding: 0 0 2px 4px; font-family: "Open Sans", sans-serif; font-size: 12px; }
.winbtns { display: flex; }
.winbtns button { width: 46px; height: 28px; display: grid; place-items: center; }

.menubar { display: flex; align-items: center; height: 24px; flex: none; padding: 0 0 1px 4px; color: #454c5a; }
.grip { flex: none; width: 3px; height: 15px; background: repeating-linear-gradient(#fff 0 2px, #b3b8c4 2px 3px, transparent 3px 4px); }
.bridge { width: 18px; height: 14px; margin: 0 8px 0 3px; }
.menubar a { color: inherit; text-decoration: none; margin: 0 15px 1px 0; white-space: nowrap; }
.mdi { display: flex; gap: 6px; margin-left: auto; padding: 6px 5px 0 0; }
.mdi button { display: grid; }

.toolbar { display: flex; height: 26px; flex: none; background: #cfd4de; }
.group { display: flex; align-items: center; height: 26px; padding-top: 1px; background: linear-gradient(#eef1f8, #e3e7f0 45%, #d5dae5); border-bottom: 1px solid #b4bac6; border-radius: 0 4px 4px 0; }
.group:last-child { flex: 1; }
.group .grip { margin: 0 5px 0 4px; }
.group:first-child .grip { margin: 0 3px 0 4px; }
.sep { width: 8px; height: 14px; flex: none; background: linear-gradient(90deg, transparent 3px, #a4aab8 3px 4px, #fff 4px 5px, transparent 5px); }
.b { width: 22px; height: 22px; flex: none; display: grid; place-items: center; border-radius: 2px; }
.b svg, .menu svg, .tabs svg { width: 18px; height: 18px; display: block; }
.s { width: 35px; grid-template-columns: 24px 11px; }
.s::after { content: ""; border: 3px solid transparent; border-top-color: #666c78; border-bottom: 0; }
.on { background: linear-gradient(#fce0b0, #fdc878 50%, #ffe8a4); box-shadow: inset 0 0 0 1px #c59a5a; }
.dim svg { opacity: .4; }
.combo { width: 216px; height: 18px; margin: 0 2px; border: 1px solid #a3a9b4; appearance: none; background: conic-gradient(from -45deg at 50% 100%, #777 0 90deg, transparent 0) right 4px center / 7px 4px no-repeat #ededed; }
.drop { position: relative; }
.red { box-shadow: 0 0 0 2px #e8222e; background: linear-gradient(#fff0c0, #ffcf50 50%, #ffe28a); }
.menu { position: absolute; z-index: 5; left: 0; top: 22px; width: 203px; padding: 0 1px 2px; border: 1px solid #868a92; background: linear-gradient(90deg, #e9edf6 25px, #c6cad2 25px 26px, #fafafa 26px); box-shadow: 2px 2px 2px #0003; color: #3c4350; }
.menu button { display: flex; align-items: center; width: 100%; height: 22px; padding-left: 3px; text-align: left; }
.menu span { padding-left: 9px; }
.menu button:disabled { color: #a2a4a8; }
.menu .hot { outline: 3px solid #e8222e; background: linear-gradient(#fffbe4, #ffeaa4 45%, #ffd030 50%, #ffe27a); }

.work { display: flex; flex: 1; min-height: 0; }
.navi { width: 322px; flex: none; display: flex; flex-direction: column; padding: 1px 2px 0 1px; }
.navihead { display: flex; align-items: center; gap: 8px; height: 18px; flex: none; padding: 0 4px 2px 3px; background: #bac0cc; color: #333a46; }
.navihead h2 { flex: 1; }
.navihead button { display: grid; }
.treebox { flex: 1; min-height: 0; display: flex; flex-direction: column; margin: 3px 0 0 2px; border: 1px solid #8b909c; background: #fbfbf3; font-family: "Noto Sans", "Open Sans", sans-serif; }
.treemain { flex: 1; min-height: 0; display: flex; overflow: hidden; }
.tree { flex: 1; min-width: 0; overflow: hidden; padding-left: 2px; }
.tree ul { padding-left: 19px; }
.tree li { background: repeating-linear-gradient(#888 0 1px, transparent 1px 2px) 9px 0 / 1px 100% no-repeat; }
.tree li:last-child { background-size: 1px 9px; }
.r { display: flex; align-items: center; height: 18px; white-space: nowrap; padding-left: 5px; background: repeating-linear-gradient(90deg, #888 0 1px, transparent 1px 2px) 9px 9px / 13px 1px no-repeat; }
.r svg { width: 16px; height: 16px; flex: none; margin-right: 3px; }
.r > svg:first-child { margin-left: 17px; }
.t { width: 9px; height: 9px; margin-right: 8px; flex: none; border: 1px solid #8c8f98; background: linear-gradient(#33488c, #33488c) center / 5px 1px no-repeat, #f4f5f8; }
.t.p { background: linear-gradient(#33488c, #33488c) center / 5px 1px no-repeat, linear-gradient(#33488c, #33488c) center / 1px 5px no-repeat, #f4f5f8; }
.vs { width: 15px; margin-right: 4px; background: #f0f0f0; display: flex; flex-direction: column; align-items: center; padding: 6px 0 5px; }
.vs i { width: 100%; height: 336px; margin: 12px 0 auto; background: #cdcdcd; }
.hs { display: flex; align-items: center; height: 18px; background: #f0f0f0; padding: 0 26px 0 5px; }
.hs i { width: 154px; height: 15px; margin: 0 auto 0 6px; background: #cdcdcd; }
.ch { fill: none; stroke: #444; stroke-width: 2; }
.tabs { display: flex; height: 25px; flex: none; padding-left: 3px; gap: 5px; align-items: flex-start; color: #454c5a; }
.tabs button { display: flex; align-items: center; gap: 1px; height: 22px; padding: 0 3px 0 1px; border-radius: 0 0 3px 3px; }
.tabs .cur { background: #f6f8fa; box-shadow: 0 1px 1px #9ccbd0; }

.view { flex: 1; min-width: 0; margin: 1px 0 2px 3px; border: 1px solid #63666d; border-width: 2px 0 0 2px; background: #fff; }
.scene { width: 100%; height: 100%; display: block; }
.lab text { font: 10px "Liberation Sans", sans-serif; }

.status { display: flex; align-items: center; height: 21px; flex: none; gap: 2px; padding-left: 3px; background: linear-gradient(#dde0e6, #a9b0bc 50%, #bfc4ce 90%, #666 95%); color: #1c2230; border-top: 1px solid #b7bcc6; font-family: "Liberation Sans", Arial, sans-serif; font-size: 11px; }
.status p { width: 606px; flex: none; }
.status button { flex: none; height: 18px; text-align: left; padding-left: 1px; border: 1px solid; border-color: #111 #fff #fff #111; white-space: nowrap; }
.status .up { border-color: #fff #888 #888 #fff; }
.w1 { width: 28px; } .w2 { width: 41px; } .w3 { width: 46px; } .w4 { width: 50px; } .w5 { width: 55px; }
.panes { display: flex; margin-left: auto; height: 18px; }
.panes i { width: 78px; border-left: 1px solid #8f96a3; box-shadow: inset 1px 0 #d5d9e0; }
.size { align-self: flex-end; margin-bottom: 3px; }
```
